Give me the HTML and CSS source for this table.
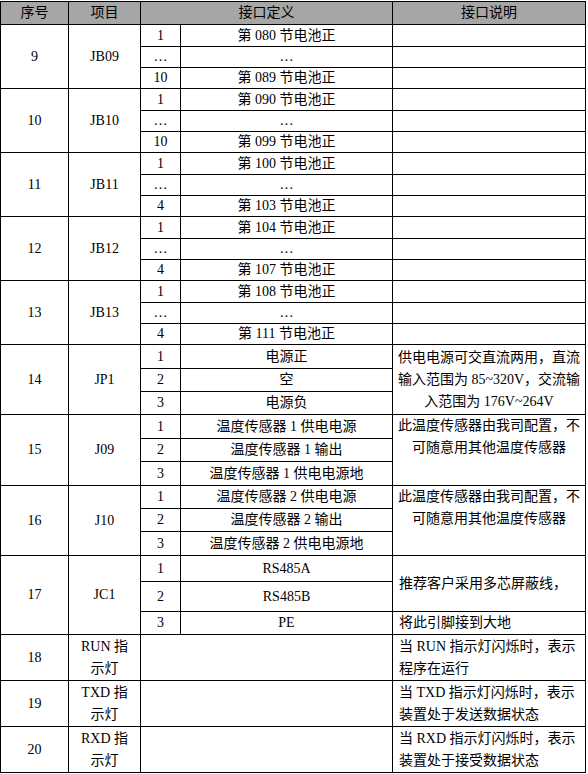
FILE: index.html
```html
<!DOCTYPE html>
<html lang="zh-CN">
<head>
<meta charset="utf-8">
<title>接口定义</title>
<link rel="stylesheet" href="styles.css">
</head>
<body>
<table class="spec">
  <colgroup>
    <col class="c-no">
    <col class="c-item">
    <col class="c-pin">
    <col class="c-def">
    <col class="c-desc">
  </colgroup>
  <thead>
    <tr class="h-head">
      <th>序号</th>
      <th>项目</th>
      <th colspan="2">接口定义</th>
      <th>接口说明</th>
    </tr>
  </thead>
  <tbody>
    <tr class="h22"><td rowspan="3">9</td><td rowspan="3">JB09</td><td class="pin">1</td><td>第 080 节电池正</td><td></td></tr>
    <tr class="h21"><td class="pin">…</td><td>…</td><td></td></tr>
    <tr class="h21"><td class="pin">10</td><td>第 089 节电池正</td><td></td></tr>

    <tr class="h22"><td rowspan="3">10</td><td rowspan="3">JB10</td><td class="pin">1</td><td>第 090 节电池正</td><td></td></tr>
    <tr class="h21"><td class="pin">…</td><td>…</td><td></td></tr>
    <tr class="h21"><td class="pin">10</td><td>第 099 节电池正</td><td></td></tr>

    <tr class="h22"><td rowspan="3">11</td><td rowspan="3">JB11</td><td class="pin">1</td><td>第 100 节电池正</td><td></td></tr>
    <tr class="h21"><td class="pin">…</td><td>…</td><td></td></tr>
    <tr class="h21"><td class="pin">4</td><td>第 103 节电池正</td><td></td></tr>

    <tr class="h22"><td rowspan="3">12</td><td rowspan="3">JB12</td><td class="pin">1</td><td>第 104 节电池正</td><td></td></tr>
    <tr class="h21"><td class="pin">…</td><td>…</td><td></td></tr>
    <tr class="h21"><td class="pin">4</td><td>第 107 节电池正</td><td></td></tr>

    <tr class="h22"><td rowspan="3">13</td><td rowspan="3">JB13</td><td class="pin">1</td><td>第 108 节电池正</td><td></td></tr>
    <tr class="h21"><td class="pin">…</td><td>…</td><td></td></tr>
    <tr class="h21"><td class="pin">4</td><td>第 111 节电池正</td><td></td></tr>

    <tr class="h24"><td rowspan="3">14</td><td rowspan="3">JP1</td><td class="pin">1</td><td>电源正</td><td rowspan="3" class="desc center">供电电源可交直流两用，直流<br>输入范围为 85~320V，交流输<br>入范围为 176V~264V</td></tr>
    <tr class="h23"><td class="pin">2</td><td>空</td></tr>
    <tr class="h23"><td class="pin">3</td><td>电源负</td></tr>

    <tr class="h24"><td rowspan="3">15</td><td rowspan="3">J09</td><td class="pin">1</td><td>温度传感器 1 供电电源</td><td rowspan="3" class="desc center top">此温度传感器由我司配置，不可随意用其他温度传感器</td></tr>
    <tr class="h23"><td class="pin">2</td><td>温度传感器 1 输出</td></tr>
    <tr class="h24"><td class="pin">3</td><td>温度传感器 1 供电电源地</td></tr>

    <tr class="h23"><td rowspan="3">16</td><td rowspan="3">J10</td><td class="pin">1</td><td>温度传感器 2 供电电源</td><td rowspan="3" class="desc center top">此温度传感器由我司配置，不可随意用其他温度传感器</td></tr>
    <tr class="h23"><td class="pin">2</td><td>温度传感器 2 输出</td></tr>
    <tr class="h24"><td class="pin">3</td><td>温度传感器 2 供电电源地</td></tr>

    <tr class="h26"><td rowspan="3">17</td><td rowspan="3">JC1</td><td class="pin">1</td><td>RS485A</td><td rowspan="2" class="desc">推荐客户采用多芯屏蔽线，</td></tr>
    <tr class="h30"><td class="pin">2</td><td>RS485B</td></tr>
    <tr class="h23"><td class="pin">3</td><td>PE</td><td class="desc">将此引脚接到大地</td></tr>

    <tr class="h46"><td>18</td><td class="item2">RUN 指<br>示灯</td><td colspan="2"></td><td class="desc">当 RUN 指示灯闪烁时，表示程序在运行</td></tr>
    <tr class="h46"><td>19</td><td class="item2">TXD 指<br>示灯</td><td colspan="2"></td><td class="desc">当 TXD 指示灯闪烁时，表示装置处于发送数据状态</td></tr>
    <tr class="h46"><td>20</td><td class="item2">RXD 指<br>示灯</td><td colspan="2"></td><td class="desc">当 RXD 指示灯闪烁时，表示装置处于接受数据状态</td></tr>
  </tbody>
</table>
</body>
</html>
```

FILE: styles.css
```css
html, body {
  margin: 0;
  padding: 0;
  background: #ffffff;
}

body {
  padding-top: 1px;
  font-family: "Liberation Serif", "Noto Sans CJK SC", serif;
  font-size: 14px;
  color: #000000;
}

.spec {
  border-collapse: collapse;
  table-layout: fixed;
  width: 586px;
}

.c-no { width: 68px; }
.c-item { width: 72px; }
.c-pin { width: 40px; }
.c-def { width: 212px; }
.c-desc { width: 193px; }

.spec th,
.spec td {
  border: 1px solid #000000;
  padding: 0;
  text-align: center;
  vertical-align: middle;
  line-height: 20px;
  font-weight: normal;
  overflow: hidden;
}

.spec th {
  background: #a6a6a6;
  font-family: "Noto Sans CJK SC", sans-serif;
  line-height: 19px;
  vertical-align: top;
}

.h-head { height: 23px; }
.h21 { height: 21px; }
.h22 { height: 22px; }
.h23 { height: 23px; }
.h24 { height: 24px; }
.h26 { height: 26px; }
.h30 { height: 30px; }
.h46 { height: 46px; }

.spec td.desc {
  text-align: left;
  padding: 0 6px 0 6px;
  line-height: 22px;
}

.spec td.desc.center {
  text-align: center;
  padding: 0 4px;
  white-space: nowrap;
}

.spec td.desc.center.top {
  white-space: normal;
  vertical-align: top;
}

.spec td.item2 {
  line-height: 22px;
}
```
